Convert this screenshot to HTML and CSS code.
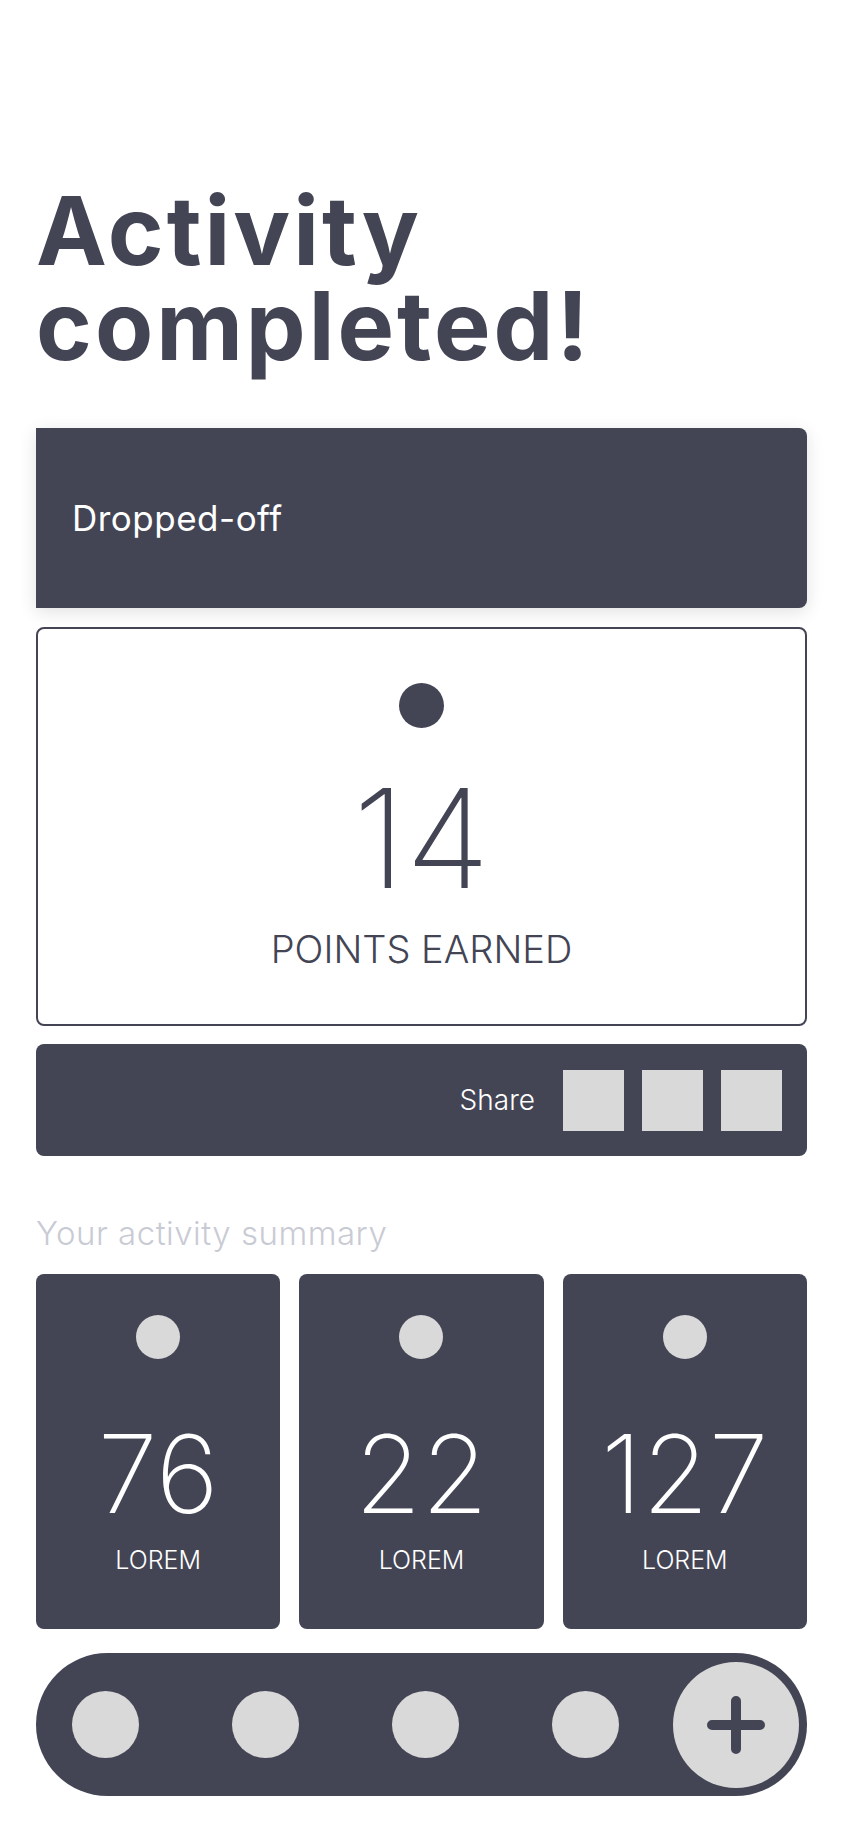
FILE: index.html
```html
<!DOCTYPE html>
<html lang="en">
<head>
  <meta charset="UTF-8" />
  <meta name="viewport" content="width=device-width, initial-scale=1.0" />
  <title>Activity completed</title>
  <link rel="stylesheet" href="styles.css">
</head>
<body>

<div class="page">
  <h1 class="title">Activity completed!</h1>

  <div class="status-card">Dropped-off</div>

  <div class="points-card">
    <span class="dot dot-dark"></span>
    <div class="points-value">14</div>
    <div class="points-label">POINTS EARNED</div>
  </div>

  <div class="share-bar">
    <span class="share-text">Share</span>
    <span class="share-btn"></span>
    <span class="share-btn"></span>
    <span class="share-btn"></span>
  </div>

  <h3 class="summary-title">Your activity summary</h3>

  <div class="stats">
    <div class="stat">
      <span class="dot"></span>
      <div class="stat-value">76</div>
      <div class="stat-label">LOREM</div>
    </div>
    <div class="stat">
      <span class="dot"></span>
      <div class="stat-value">22</div>
      <div class="stat-label">LOREM</div>
    </div>
    <div class="stat">
      <span class="dot"></span>
      <div class="stat-value">127</div>
      <div class="stat-label">LOREM</div>
    </div>
  </div>

  <nav class="tabbar">
    <div class="tabs">
      <span class="tab"></span>
      <span class="tab"></span>
      <span class="tab"></span>
      <span class="tab"></span>
    </div>
    <button class="add-btn" type="button">
      <svg width="58" height="58" viewBox="0 0 58 58">
        <path d="M29 5 V53 M5 29 H53" stroke="#434555" stroke-width="10" stroke-linecap="round" fill="none"/>
      </svg>
    </button>
  </nav>
</div>

</body>
</html>
```

FILE: styles.css
```css
body {
  margin: 0;
  font-family: 'Inter', sans-serif;
  background: #fff;
  color: #434555;
}

.page {
  padding: 183px 37px 30px 36px;
}

.title {
  margin: 0;
  font-size: 95px;
  line-height: 95px;
  font-weight: 700;
  letter-spacing: 3px;
  color: #434555;
  width: 620px;
}

.status-card {
  margin-top: 55px;
  height: 180px;
  background: #434555;
  border-radius: 0 8px 8px 0;
  box-shadow: 0 4px 18px rgba(0, 0, 0, 0.12);
  color: #fff;
  font-size: 35px;
  letter-spacing: 0.5px;
  display: flex;
  align-items: center;
  padding-left: 36px;
}

.points-card {
  margin-top: 19px;
  height: 399px;
  box-sizing: border-box;
  border: 2px solid #434555;
  border-radius: 8px;
  display: flex;
  flex-direction: column;
  align-items: center;
  padding-top: 54px;
}

.dot {
  width: 44px;
  height: 44px;
  border-radius: 50%;
  background: #d9d9d9;
  display: block;
  flex-shrink: 0;
}

.dot-dark {
  width: 45px;
  height: 45px;
  background: #434555;
}

.points-value {
  font-size: 138px;
  font-weight: 200;
  line-height: 1;
  margin-top: 41px;
}

.points-label {
  font-size: 38px;
  font-weight: 300;
  margin-top: 19px;
}

.share-bar {
  margin-top: 18px;
  height: 112px;
  background: #434555;
  border-radius: 8px;
  display: flex;
  justify-content: flex-end;
  align-items: center;
  gap: 18px;
  padding-right: 25px;
}

.share-text {
  color: #fff;
  font-size: 28px;
  font-weight: 300;
  margin-right: 10px;
}

.share-btn {
  width: 61px;
  height: 61px;
  background: #d9d9d9;
}

.summary-title {
  margin: 57px 0 0;
  font-size: 33px;
  font-weight: 300;
  letter-spacing: 0.5px;
  color: #c9cbd4;
}

.stats {
  margin-top: 21px;
  display: grid;
  grid-template-columns: repeat(3, 1fr);
  gap: 19px;
}

.stat {
  height: 355px;
  background: #434555;
  border-radius: 8px;
  display: flex;
  flex-direction: column;
  align-items: center;
  padding-top: 41px;
  box-sizing: border-box;
  color: #fff;
}

.stat-value {
  font-size: 108px;
  font-weight: 200;
  line-height: 1;
  margin-top: 61px;
}

.stat-label {
  font-size: 25px;
  font-weight: 300;
  margin-top: 17px;
}

.tabbar {
  margin-top: 24px;
  height: 143px;
  background: #434555;
  border-radius: 72px;
  display: flex;
  align-items: center;
  padding: 0 8px 0 36px;
}

.tabs {
  display: flex;
  gap: 93px;
}

.tab {
  width: 67px;
  height: 67px;
  border-radius: 50%;
  background: #d9d9d9;
  flex-shrink: 0;
}

.add-btn {
  margin-left: auto;
  width: 126px;
  height: 126px;
  flex-shrink: 0;
  border: none;
  border-radius: 50%;
  background: #d9d9d9;
  display: flex;
  align-items: center;
  justify-content: center;
  padding: 0;
}
```
